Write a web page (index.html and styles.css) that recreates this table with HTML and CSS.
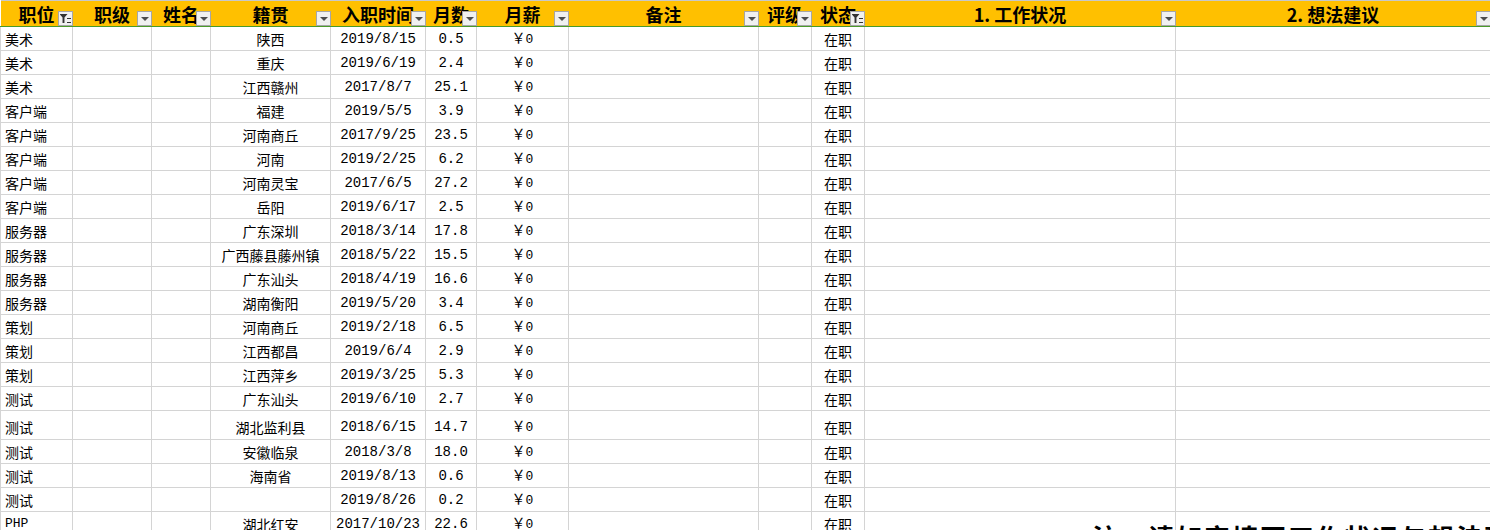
FILE: index.html
```html
<!DOCTYPE html>
<html lang="zh-CN">
<head>
    <meta charset="UTF-8">
    <title>员工信息表</title>
    <link rel="stylesheet" href="styles.css">
</head>
<body>
    <table class="sheet">
        <colgroup>
            <col style="width:72px"><col style="width:79px"><col style="width:59px"><col style="width:120px">
            <col style="width:95px"><col style="width:51px"><col style="width:92px"><col style="width:190px">
            <col style="width:53px"><col style="width:53px"><col style="width:311px"><col style="width:315px">
        </colgroup>
        <thead>
            <tr>
                <th>职位<span class="filter on"></span></th>
                <th>职级<span class="filter"></span></th>
                <th>姓名<span class="filter"></span></th>
                <th>籍贯<span class="filter"></span></th>
                <th>入职时间<span class="filter"></span></th>
                <th>月数<span class="filter"></span></th>
                <th>月薪<span class="filter"></span></th>
                <th>备注<span class="filter"></span></th>
                <th>评级<span class="filter"></span></th>
                <th>状态<span class="filter on"></span></th>
                <th>1. 工作状况<span class="filter"></span></th>
                <th>2. 想法建议<span class="filter"></span></th>
            </tr>
        </thead>
        <tbody>
            <tr><td class="pos">美术</td><td></td><td></td><td class="mid">陕西</td><td class="num">2019/8/15</td><td class="num">0.5</td><td class="mid">￥<span class="num">0</span></td><td></td><td></td><td class="mid">在职</td><td></td><td></td></tr>
            <tr><td class="pos">美术</td><td></td><td></td><td class="mid">重庆</td><td class="num">2019/6/19</td><td class="num">2.4</td><td class="mid">￥<span class="num">0</span></td><td></td><td></td><td class="mid">在职</td><td></td><td></td></tr>
            <tr><td class="pos">美术</td><td></td><td></td><td class="mid">江西赣州</td><td class="num">2017/8/7</td><td class="num">25.1</td><td class="mid">￥<span class="num">0</span></td><td></td><td></td><td class="mid">在职</td><td></td><td></td></tr>
            <tr><td class="pos">客户端</td><td></td><td></td><td class="mid">福建</td><td class="num">2019/5/5</td><td class="num">3.9</td><td class="mid">￥<span class="num">0</span></td><td></td><td></td><td class="mid">在职</td><td></td><td></td></tr>
            <tr><td class="pos">客户端</td><td></td><td></td><td class="mid">河南商丘</td><td class="num">2017/9/25</td><td class="num">23.5</td><td class="mid">￥<span class="num">0</span></td><td></td><td></td><td class="mid">在职</td><td></td><td></td></tr>
            <tr><td class="pos">客户端</td><td></td><td></td><td class="mid">河南</td><td class="num">2019/2/25</td><td class="num">6.2</td><td class="mid">￥<span class="num">0</span></td><td></td><td></td><td class="mid">在职</td><td></td><td></td></tr>
            <tr><td class="pos">客户端</td><td></td><td></td><td class="mid">河南灵宝</td><td class="num">2017/6/5</td><td class="num">27.2</td><td class="mid">￥<span class="num">0</span></td><td></td><td></td><td class="mid">在职</td><td></td><td></td></tr>
            <tr><td class="pos">客户端</td><td></td><td></td><td class="mid">岳阳</td><td class="num">2019/6/17</td><td class="num">2.5</td><td class="mid">￥<span class="num">0</span></td><td></td><td></td><td class="mid">在职</td><td></td><td></td></tr>
            <tr><td class="pos">服务器</td><td></td><td></td><td class="mid">广东深圳</td><td class="num">2018/3/14</td><td class="num">17.8</td><td class="mid">￥<span class="num">0</span></td><td></td><td></td><td class="mid">在职</td><td></td><td></td></tr>
            <tr><td class="pos">服务器</td><td></td><td></td><td class="mid">广西藤县藤州镇</td><td class="num">2018/5/22</td><td class="num">15.5</td><td class="mid">￥<span class="num">0</span></td><td></td><td></td><td class="mid">在职</td><td></td><td></td></tr>
            <tr><td class="pos">服务器</td><td></td><td></td><td class="mid">广东汕头</td><td class="num">2018/4/19</td><td class="num">16.6</td><td class="mid">￥<span class="num">0</span></td><td></td><td></td><td class="mid">在职</td><td></td><td></td></tr>
            <tr><td class="pos">服务器</td><td></td><td></td><td class="mid">湖南衡阳</td><td class="num">2019/5/20</td><td class="num">3.4</td><td class="mid">￥<span class="num">0</span></td><td></td><td></td><td class="mid">在职</td><td></td><td></td></tr>
            <tr><td class="pos">策划</td><td></td><td></td><td class="mid">河南商丘</td><td class="num">2019/2/18</td><td class="num">6.5</td><td class="mid">￥<span class="num">0</span></td><td></td><td></td><td class="mid">在职</td><td></td><td></td></tr>
            <tr><td class="pos">策划</td><td></td><td></td><td class="mid">江西都昌</td><td class="num">2019/6/4</td><td class="num">2.9</td><td class="mid">￥<span class="num">0</span></td><td></td><td></td><td class="mid">在职</td><td></td><td></td></tr>
            <tr><td class="pos">策划</td><td></td><td></td><td class="mid">江西萍乡</td><td class="num">2019/3/25</td><td class="num">5.3</td><td class="mid">￥<span class="num">0</span></td><td></td><td></td><td class="mid">在职</td><td></td><td></td></tr>
            <tr><td class="pos">测试</td><td></td><td></td><td class="mid">广东汕头</td><td class="num">2019/6/10</td><td class="num">2.7</td><td class="mid">￥<span class="num">0</span></td><td></td><td></td><td class="mid">在职</td><td></td><td></td></tr>
            <tr class="tall"><td class="pos">测试</td><td></td><td></td><td class="mid">湖北监利县</td><td class="num">2018/6/15</td><td class="num">14.7</td><td class="mid">￥<span class="num">0</span></td><td></td><td></td><td class="mid">在职</td><td></td><td></td></tr>
            <tr><td class="pos">测试</td><td></td><td></td><td class="mid">安徽临泉</td><td class="num">2018/3/8</td><td class="num">18.0</td><td class="mid">￥<span class="num">0</span></td><td></td><td></td><td class="mid">在职</td><td></td><td></td></tr>
            <tr><td class="pos">测试</td><td></td><td></td><td class="mid">海南省</td><td class="num">2019/8/13</td><td class="num">0.6</td><td class="mid">￥<span class="num">0</span></td><td></td><td></td><td class="mid">在职</td><td></td><td></td></tr>
            <tr><td class="pos">测试</td><td></td><td></td><td class="mid"></td><td class="num">2019/8/26</td><td class="num">0.2</td><td class="mid">￥<span class="num">0</span></td><td></td><td></td><td class="mid">在职</td><td></td><td></td></tr>
            <tr><td class="pos num-pos">PHP</td><td></td><td></td><td class="mid">湖北红安</td><td class="num">2017/10/23</td><td class="num">22.6</td><td class="mid">￥<span class="num">0</span></td><td></td><td></td><td class="mid">在职</td><td></td><td></td></tr>
        </tbody>
    </table>

    <!-- text box sitting over the sheet, mostly below the visible area -->
    <div class="note">注：请如实填写工作状况与想法建议</div>
</body>
</html>
```

FILE: styles.css
```css
* { margin: 0; padding: 0; box-sizing: border-box; }
body {
    background: #fff;
    color: #000;
    font-family: "Noto Sans CJK SC", sans-serif;
    width: 1490px;
    height: 530px;
    overflow: hidden;
    position: relative;
}
.sheet {
    width: 1490px;
    border-collapse: collapse;
    table-layout: fixed;
}
.sheet th {
    position: relative;
    height: 26px;
    padding: 0;
    background: #ffc000;
    border-top: 1px solid #c8c8c8;
    border-bottom: 1px solid #4a9a2a;
    font-size: 18px;
    font-weight: bold;
    line-height: 24px;
    text-align: center;
    white-space: nowrap;
    overflow: hidden;
}
.sheet td {
    height: 24px;
    padding: 0;
    border: 1px solid #d4d4d4;
    font-size: 14px;
    line-height: 20px;
    white-space: nowrap;
    overflow: hidden;
    text-align: center;
}
.sheet tr.tall td { height: 29px; padding-top: 3px; }
.sheet td.pos { text-align: left; padding-left: 4px; }
.sheet td.num-pos { font-family: "Liberation Mono", monospace; font-size: 13px; }
.num {
    font-family: "Liberation Mono", monospace;
    font-size: 13px;
    line-height: 20px;
}
.filter {
    position: absolute;
    right: 0;
    bottom: 0;
    width: 15px;
    height: 15px;
    background: #f0f0f0;
    border: 1px solid #a6a6a6;
}
.filter::after {
    content: "";
    position: absolute;
    left: 3px;
    top: 5px;
    border-left: 4px solid transparent;
    border-right: 4px solid transparent;
    border-top: 4px solid #4d4d4d;
}
.filter.on::after {
    left: 1px;
    top: 2px;
    width: 8px;
    height: 9px;
    border: none;
    background: #333;
    clip-path: polygon(0 0, 100% 0, 62% 40%, 62% 100%, 38% 100%, 38% 40%);
}
.filter.on::before {
    content: "";
    position: absolute;
    right: 1px;
    bottom: 2px;
    width: 4px;
    height: 3px;
    border-top: 1px solid #333;
    border-bottom: 1px solid #333;
}
.note {
    position: absolute;
    left: 1092px;
    top: 524px;
    font-size: 26px;
    font-weight: bold;
    line-height: 1;
    letter-spacing: 2px;
    white-space: nowrap;
}
```
